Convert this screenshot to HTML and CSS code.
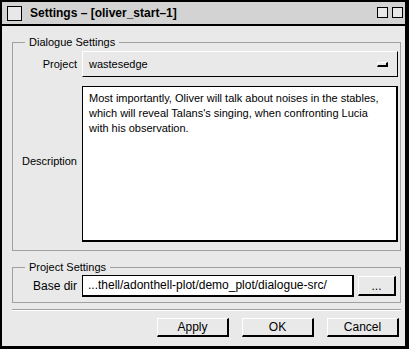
FILE: index.html
```html
<!DOCTYPE html>
<html lang="en">
<head>
  <meta charset="UTF-8" />
  <title>Settings</title>
  <link rel="stylesheet" href="styles.css">
</head>
<body>
  <div class="window">
    <div class="titlebar">
      <span class="title-icon"></span>
      <span class="title">Settings – [oliver_start–1]</span>
      <span class="title-buttons">
        <span class="title-btn"></span>
        <span class="title-btn"></span>
      </span>
    </div>

    <div class="content">
      <fieldset class="group">
        <legend>Dialogue Settings</legend>
        <div class="form dialogue-form">
          <label>Project</label>
          <div class="combo">
            <span>wastesedge</span>
            <span class="combo-ind"></span>
          </div>
          <label class="desc-label">Description</label>
          <div class="textbox">Most importantly, Oliver will talk about noises in the stables,<br>which will reveal Talans's singing, when confronting Lucia<br>with his observation.</div>
        </div>
      </fieldset>

      <fieldset class="group project-group">
        <legend>Project Settings</legend>
        <div class="form project-form">
          <label class="dir-label">Base dir</label>
          <div class="dir-row">
            <div class="entry">...thell/adonthell-plot/demo_plot/dialogue-src/</div>
            <button class="btn browse">...</button>
          </div>
        </div>
      </fieldset>

      <div class="separator"></div>

      <div class="actions">
        <button class="btn action">Apply</button>
        <button class="btn action">OK</button>
        <button class="btn action">Cancel</button>
      </div>
    </div>
  </div>
</body>
</html>
```

FILE: styles.css
```css
* {
  margin: 0;
  padding: 0;
  box-sizing: border-box;
}

body {
  background: #e9e9e9;
  font-family: 'Liberation Sans', Arial, sans-serif;
  font-size: 11px;
  color: #000;
}

.window {
  width: 409px;
  height: 349px;
  border-style: solid;
  border-color: #000;
  border-width: 2px 4px 3px 2px;
  background: #e9e9e9;
  display: flex;
  flex-direction: column;
}

/* Title bar */
.titlebar {
  height: 24px;
  background: #d3d3d3;
  border-bottom: 2px solid #000;
  display: flex;
  align-items: center;
}

.title-icon {
  width: 15px;
  height: 15px;
  margin-left: 5px;
  border: 1px solid #000;
  background: #e8e8e8;
}

.title {
  margin-left: 8px;
  font-weight: bold;
  font-size: 12px;
  flex: 1;
}

.title-buttons {
  display: flex;
  gap: 4px;
  margin-right: 2px;
  align-self: flex-start;
  margin-top: 5px;
}

.title-btn {
  width: 11px;
  height: 11px;
  border: 1px solid #000;
  background: #e8e8e8;
}

/* Body */
.content {
  flex: 1;
  padding: 9px 4px 0 10px;
  display: flex;
  flex-direction: column;
}

.group {
  border: 1px solid #a0a0a0;
  padding: 0;
  min-width: 0;
}

.group legend {
  margin-left: 12px;
  padding: 0 4px;
  line-height: 14px;
}

.form {
  display: grid;
  grid-template-columns: 64px minmax(0, 1fr);
  column-gap: 5px;
  row-gap: 9px;
  align-items: center;
}

.form label {
  text-align: right;
}

.desc-label {
  margin-top: -6px;
}

.dir-label {
  font-size: 12px;
}

.dialogue-form {
  padding: 2px 2px 8px 0;
}

.combo {
  height: 26px;
  background: #e9e9e9;
  border-style: solid;
  border-width: 1px;
  border-color: #fff #000 #000 #fff;
  display: flex;
  align-items: center;
  justify-content: space-between;
  padding: 0 9px 0 6px;
}

.combo-ind {
  width: 11px;
  height: 5px;
  border-style: solid;
  border-width: 1px 2px 2px 1px;
  border-color: #fff #000 #000 #fff;
  margin-top: 1px;
}

.textbox {
  height: 156px;
  background: #fff;
  border: solid #000;
  border-width: 1px 2px 2px 1px;
  padding: 4px 6px;
  line-height: 15px;
  white-space: nowrap;
  overflow: hidden;
}

.project-group {
  margin-top: 9px;
}

.project-form {
  padding: 1px 0 5px 0;
}

.dir-row {
  display: flex;
  align-items: center;
  gap: 4px;
  padding-right: 4px;
}

.entry {
  flex: 1;
  height: 22px;
  background: #fff;
  border: solid #000;
  border-width: 1px 2px 2px 1px;
  padding: 0 5px;
  font-size: 12px;
  line-height: 19px;
  white-space: nowrap;
  overflow: hidden;
}

.btn {
  font-family: 'Liberation Sans', Arial, sans-serif;
  font-size: 12px;
  color: #000;
  background: #e9e9e9;
  border-style: solid;
  border-width: 1px 2px 2px 1px;
  border-color: #fff #000 #000 #fff;
}

.browse {
  width: 38px;
  height: 20px;
}

.separator {
  margin-top: 6px;
  height: 2px;
  border-top: 1px solid #a0a0a0;
  border-bottom: 1px solid #fff;
}

.actions {
  display: flex;
  justify-content: flex-end;
  gap: 13px;
  margin-top: 7px;
  padding-right: 2px;
}

.action {
  width: 72px;
  height: 19px;
}
```
